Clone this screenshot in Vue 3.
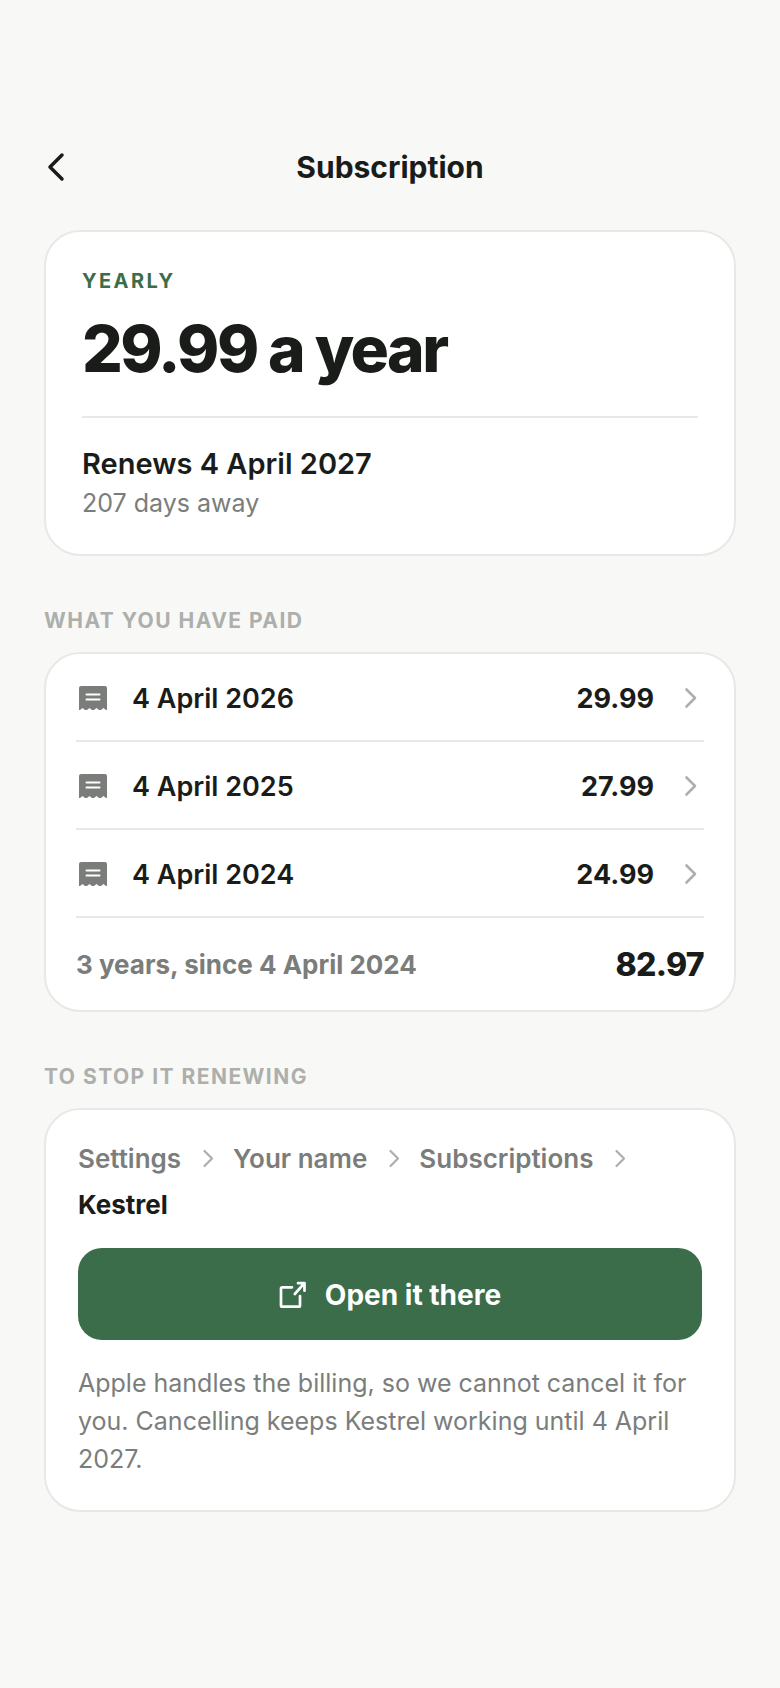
<template>
  <main class="screen">
    <header class="topbar">
      <button class="back" type="button" aria-label="Back">
        <svg width="32" height="32" viewBox="0 0 32 32" fill="none">
          <path d="M18 4 6 16l12 12" />
        </svg>
      </button>
      <h1 class="title">Subscription</h1>
    </header>

    <section class="card plan">
      <p class="plan-name">{{ plan.name }}</p>
      <p class="plan-price">{{ plan.price }} a year</p>
      <div class="plan-renewal">
        <p class="plan-date">Renews {{ plan.renews }}</p>
        <p class="plan-days">{{ plan.daysLeft }} days away</p>
      </div>
    </section>

    <h2 class="label">What you have paid</h2>
    <section class="card payments">
      <a v-for="item in payments" :key="item.date" class="payment" href="#">
        <svg class="receipt" width="34" height="34" viewBox="0 0 34 34">
          <path
            class="receipt-paper"
            d="M3 7q0-2 2-2h24q2 0 2 2v22h-1l-2.500-2-2.500 2h-2l-2.500-2L18 29h-2l-2.500-2L11 29H9l-2.500-2L4 29H3Z"
          />
          <path class="receipt-lines" d="M10.500 13.500h13M10.500 18.500h13" />
        </svg>
        <span class="payment-date">{{ item.date }}</span>
        <span class="payment-amount">{{ item.amount.toFixed(2) }}</span>
        <svg class="chevron" width="24" height="24" viewBox="0 0 24 24">
          <path d="m6.500 3.500 8.500 8.500-8.500 8.500" />
        </svg>
      </a>
      <div class="total">
        <span class="total-text">{{ payments.length }} years, since {{ since }}</span>
        <span class="total-amount">{{ total }}</span>
      </div>
    </section>

    <h2 class="label">To stop it renewing</h2>
    <section class="card stop">
      <ol class="path">
        <template v-for="(step, index) in steps" :key="step">
          <li :class="{ current: index === steps.length - 1 }">{{ step }}</li>
          <li v-if="index < steps.length - 1" class="path-arrow" aria-hidden="true">
            <svg class="chevron thin" width="20" height="20" viewBox="0 0 20 20">
              <path d="m7.500 2 7.500 7.500-7.500 7.500" />
            </svg>
          </li>
        </template>
      </ol>
      <button class="open" type="button">
        <svg width="28" height="28" viewBox="0 0 28 28" fill="none">
          <path
            d="M13 6.300H3.200Q2 6.300 2 7.500v17q0 1.200 1.200 1.200h16.600q1.200 0 1.200-1.200V15M19 2.200h6.500v7.500M25 2.700 15.800 13"
          />
        </svg>
        <span>Open it there</span>
      </button>
      <p class="note">
        Apple handles the billing, so we cannot cancel it for you. Cancelling
        keeps Kestrel working until {{ plan.renews }}.
      </p>
    </section>
  </main>
</template>

<script setup>
import { computed, reactive, ref } from "vue";

const plan = reactive({
  name: "Yearly",
  price: "29.99",
  renews: "4 April 2027",
  daysLeft: 207,
});

// newest first
const payments = ref([
  { date: "4 April 2026", amount: 29.99 },
  { date: "4 April 2025", amount: 27.99 },
  { date: "4 April 2024", amount: 24.99 },
]);

const steps = ["Settings", "Your name", "Subscriptions", "Kestrel"];

const since = computed(() => payments.value[payments.value.length - 1].date);
const total = computed(() =>
  payments.value.reduce((sum, item) => sum + item.amount, 0).toFixed(2)
);
</script>

<style>
body {
  margin: 0;
  background: #f8f8f6;
}
</style>

<style scoped>
* {
  box-sizing: border-box;
}
.screen {
  padding: 132px 44px 60px;
  background: #f8f8f6;
  color: #1a1c19;
  font-family: Inter, "Liberation Sans", sans-serif;
}
h1,
h2,
p,
ol {
  margin: 0;
  padding: 0;
}
button {
  border: 0;
  font-family: inherit;
}
.topbar {
  display: grid;
  grid-template-columns: 44px 1fr 44px;
  align-items: center;
  height: 70px;
  margin-bottom: 28px;
}
.back {
  display: flex;
  padding: 0;
  background: none;
}
.back path {
  stroke: #1a1c19;
  stroke-width: 3.5;
  stroke-linecap: round;
  stroke-linejoin: round;
}
.title {
  font-size: 30px;
  font-weight: 700;
  text-align: center;
}
.card {
  border: 2px solid #e8e8e6;
  border-radius: 36px;
  background: #fff;
}
.plan {
  padding: 36px 36px 34px;
}
.plan-name {
  color: #3b6d4b;
  font-size: 20px;
  font-weight: 700;
  line-height: 26px;
  letter-spacing: 0.12em;
  text-transform: uppercase;
}
.plan-price {
  margin: 17px 0 29px;
  font-size: 64px;
  font-weight: 800;
  line-height: 76px;
  letter-spacing: -0.04em;
}
.plan-renewal {
  padding-top: 28px;
  border-top: 2px solid #e8e8e6;
}
.plan-date {
  font-size: 29px;
  font-weight: 600;
  line-height: 36px;
}
.plan-days {
  margin-top: 4px;
  color: #7b7d7b;
  font-size: 25px;
  line-height: 34px;
}
.label {
  margin: 52px 0 18px;
  color: #adafac;
  font-size: 21px;
  font-weight: 700;
  line-height: 26px;
  letter-spacing: 0.07em;
  text-transform: uppercase;
}
.payments {
  padding: 0 30px;
}
.payment {
  display: flex;
  align-items: center;
  height: 88px;
  padding-top: 2px;
  border-bottom: 2px solid #e8e8e6;
  color: inherit;
  text-decoration: none;
}
.receipt {
  margin-right: 22px;
}
.receipt-paper {
  fill: #7b7d7b;
}
.receipt-lines {
  fill: none;
  stroke: #fff;
  stroke-width: 2;
  stroke-linecap: round;
}
.payment-date {
  flex: 1;
  font-size: 27px;
  font-weight: 600;
}
.payment-amount {
  margin-right: 26px;
  font-size: 27px;
  font-weight: 700;
}
.chevron {
  fill: none;
  stroke: #adafac;
  stroke-width: 2.6;
  stroke-linecap: round;
  stroke-linejoin: round;
}
.chevron.thin {
  stroke-width: 2.2;
}
.total {
  display: flex;
  align-items: center;
  justify-content: space-between;
  height: 92px;
}
.total-text {
  color: #7b7d7b;
  font-size: 26px;
  font-weight: 650;
}
.total-amount {
  font-size: 32px;
  font-weight: 800;
  letter-spacing: -0.02em;
}
.stop {
  padding: 26px 32px 32px;
}
.path {
  display: flex;
  flex-wrap: wrap;
  column-gap: 16px;
  list-style: none;
  color: #7b7d7b;
  font-size: 26px;
  font-weight: 600;
  line-height: 46px;
}
.path .current {
  color: #1a1c19;
  font-weight: 700;
}
.path-arrow {
  display: flex;
  align-items: center;
}
.open {
  display: flex;
  align-items: center;
  justify-content: center;
  gap: 18px;
  width: 100%;
  height: 92px;
  margin: 20px 0 24px;
  padding: 2px 0 0;
  border-radius: 24px;
  background: #3b6d4b;
  color: #fff;
  font-size: 28px;
  font-weight: 700;
}
.open path {
  stroke: #fff;
  stroke-width: 2.7;
  stroke-linecap: round;
  stroke-linejoin: round;
}
.note {
  color: #7b7d7b;
  font-size: 25px;
  line-height: 38px;
}
</style>
